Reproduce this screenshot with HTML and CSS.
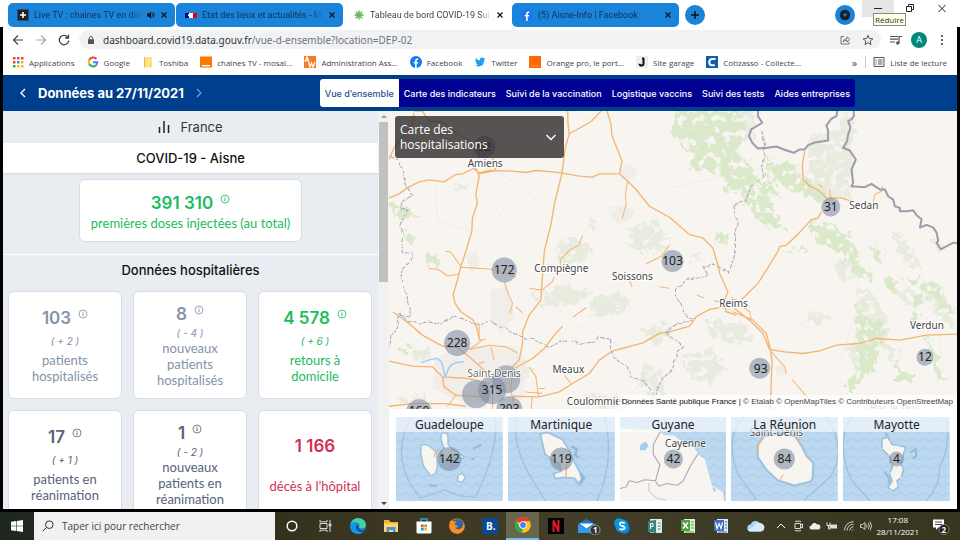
FILE: index.html
```html
<!DOCTYPE html>
<html lang="fr">
<head>
<meta charset="utf-8">
<title>Tableau de bord COVID-19</title>
<link rel="stylesheet" href="styles.css">
</head>
<body>
<svg class="defs" aria-hidden="true">
  <symbol id="info" viewBox="0 0 10 10"><circle cx="5" cy="5" r="4" fill="none" stroke="currentColor" stroke-width=".8"/><path d="M5 4.4V7.2M5 2.6v1" stroke="currentColor" fill="none"/></symbol>
  <symbol id="x" viewBox="0 0 8 8"><path d="M1.5 1.5l5 5M6.5 1.5l-5 5" stroke="currentColor" stroke-width="1.2" fill="none"/></symbol>
  <symbol id="fb" viewBox="0 0 12 12"><circle cx="6" cy="6" r="6" fill="#1877f2"/><path d="M5.1 12V7.6H3.7V5.9h1.4V4.7c0-1.5.9-2.2 2.1-2.2l1.1.1v1.500h-.8c-.6 0-.8.4-.8.8v1h1.500l-.3 1.700H6.700V12z" fill="#fff"/></symbol>
</svg>

<header class="tabs">
  <div class="tab">
    <svg class="ico" viewBox="0 0 12 12"><rect x=".5" y=".5" width="11" height="11" fill="#222"/><path d="M6 3v6M3 6h6" stroke="#fff" stroke-width="1.6"/></svg>
    <span class="tab-title">Live TV : chaines TV en direct</span>
    <svg class="small" viewBox="0 0 8 8"><path d="M0 2.500h1.800L4.200.6v6.800L1.800 5.500H0z" fill="#111"/><path d="M5.200 2.400q1.200 1.600 0 3.200M6.400 1.200q2 2.800 0 5.600" stroke="#111" fill="none" stroke-width=".8"/></svg>
    <button aria-label="Fermer"><svg viewBox="0 0 8 8"><use href="#x"/></svg></button>
  </div>
  <div class="tab">
    <svg class="ico" viewBox="0 0 12 12"><path d="M0 4h4v5H0z" fill="#000091"/><path d="M4 4h4v5H4z" fill="#fff"/><path d="M8 4h4v5H8z" fill="#e1000f"/><path d="M3 5l2 1 1 2-3-1z" fill="#fff"/></svg>
    <span class="tab-title">Etat des lieux et actualités - Minis</span>
    <button aria-label="Fermer"><svg viewBox="0 0 8 8"><use href="#x"/></svg></button>
  </div>
  <div class="tab active">
    <svg class="ico" viewBox="0 0 12 12"><g stroke="#4caf50" stroke-width="1.3"><path d="M6 1.500v9M1.500 6h9M2.800 2.800l6.400 6.400M9.200 2.800L2.800 9.200"/></g><circle cx="6" cy="6" r="2.400" fill="#6abf4b"/></svg>
    <span class="tab-title">Tableau de bord COVID-19 Suivi de</span>
    <button aria-label="Fermer"><svg viewBox="0 0 8 8"><use href="#x"/></svg></button>
  </div>
  <div class="tab">
    <svg class="ico" viewBox="0 0 12 12"><use href="#fb"/></svg>
    <span class="tab-title">(5) Aisne-Info | Facebook</span>
    <button aria-label="Fermer"><svg viewBox="0 0 8 8"><use href="#x"/></svg></button>
  </div>
  <button class="round" aria-label="Nouvel onglet"><svg viewBox="0 0 20 20"><circle cx="10" cy="10" r="10" fill="#1a83da"/><path d="M10 6v8M6 10h8" stroke="#111" stroke-width="1.5"/></svg></button>
  <div class="win">
    <button class="round" aria-label="Rechercher un onglet"><svg viewBox="0 0 20 20"><circle cx="10" cy="10" r="10" fill="#1a83da"/><circle cx="10" cy="10" r="5.200" fill="#1c1c22"/><path d="M7.600 8.800h4.800L10 12z" fill="#1a83da"/></svg></button>
    <button class="ctl min" aria-label="Réduire"><svg viewBox="0 0 32 17"><path d="M12 8.500h8" stroke="#222"/></svg><span class="tip">Réduire</span></button>
    <button class="ctl" aria-label="Niveau inférieur"><svg viewBox="0 0 32 17"><path d="M12.500 6.500h5v5h-5zM14.500 6V4.500h5v5H18" stroke="#222" fill="none"/></svg></button>
    <button class="ctl" aria-label="Fermer la fenêtre"><svg viewBox="0 0 32 17"><path d="M12.500 5l7 7M19.500 5l-7 7" stroke="#222" fill="none"/></svg></button>
  </div>
</header>

<div class="frame">
  <div class="toolbar">
    <button aria-label="Retour"><svg viewBox="0 0 16 16"><path d="M13 8H3.500M8 3.500L3.500 8 8 12.500" stroke="#444" stroke-width="1.200" fill="none"/></svg></button>
    <button aria-label="Avancer"><svg viewBox="0 0 16 16"><path d="M3 8h9.500M8 3.500l4.500 4.500L8 12.500" stroke="#aaa" stroke-width="1.200" fill="none"/></svg></button>
    <button aria-label="Actualiser"><svg viewBox="0 0 16 16"><path d="M12 5.500A4.700 4.700 0 1 0 12.700 8.500M12.500 2.500V6H9" stroke="#444" stroke-width="1.300" fill="none"/></svg></button>
    <div class="omni">
      <svg class="small" viewBox="0 0 8 8"><path d="M1 3.200h6V8H1z" fill="#555"/><path d="M2.300 3.500V2.200a1.700 1.700 0 0 1 3.400 0v1.300" stroke="#555" fill="none"/></svg>
      <a href="#">dashboard.covid19.data.gouv.fr<span>/vue-d-ensemble?location=DEP-02</span></a>
      <svg class="ico" viewBox="0 0 12 12"><path d="M5 2.500H2v7.500h8V8M4 8q.5-3.300 4-3.300V2.800L11 5.400 8 8V6.300Q5.500 6.300 4 8z" stroke="#666" stroke-width=".9" fill="none"/></svg>
      <svg class="ico" viewBox="0 0 12 12"><path d="M6 1.300l1.400 3.200 3.500.3-2.700 2.300.8 3.400-3-1.800-3 1.800.8-3.400L1.100 4.800l3.500-.3z" stroke="#555" fill="none"/></svg>
    </div>
    <button aria-label="Médias"><svg viewBox="0 0 16 16"><path d="M2 4.500h8M2 7.200h8M2 10h5M11 11V4.500h3" stroke="#555" stroke-width="1.200" fill="none"/><circle cx="9.800" cy="11" r="1.700" fill="#555"/></svg></button>
    <button class="avatar">A</button>
    <button aria-label="Menu"><svg viewBox="0 0 16 16" fill="#444"><circle cx="8" cy="4" r="1.100"/><circle cx="8" cy="8" r="1.100"/><circle cx="8" cy="12" r="1.100"/></svg></button>
  </div>

  <nav class="bookmarks">
    <a href="#"><svg class="ico" viewBox="0 0 12 12"><path d="M1 1h2.500v2.500H1zM1 5h2.500v2.500H1z" fill="#ea4335"/><path d="M5 1h2.500v2.500H5zM9 1h2.500v2.500H9z" fill="#e8453c"/><path d="M5 5h2.500v2.500H5z" fill="#4285f4"/><path d="M9 5h2.500v2.500H9zM5 9h2.500v2.500H5zM9 9h2.500v2.500H9z" fill="#fbbc05"/><path d="M1 9h2.500v2.500H1z" fill="#34a853"/></svg>Applications</a>
    <a href="#"><svg class="ico" viewBox="0 0 12 12" fill="none" stroke-width="2"><path d="M9.500 3A4.300 4.300 0 0 0 2.200 4" stroke="#ea4335"/><path d="M2.200 4a4.300 4.300 0 0 0 0 4" stroke="#fbbc05"/><path d="M2.200 8a4.300 4.300 0 0 0 6.600 1.400" stroke="#34a853"/><path d="M8.800 9.400A4.300 4.300 0 0 0 10.200 6.200H6" stroke="#4285f4"/></svg>Google</a>
    <a href="#"><svg class="ico" viewBox="0 0 12 12"><path d="M2 1h8v8.500L8 11.500H2z" fill="#ffe083"/><path d="M2 1h1v10.500H2zM8 11.500v-2h2z" fill="#e6bc4d"/></svg>Toshiba</a>
    <a href="#"><svg class="ico" viewBox="0 0 12 12"><path d="M0 .5h12v11H0z" fill="#ff7900"/><path d="M2 9h8v1.300H2z" fill="#fff"/></svg>chaînes TV - mosaï...</a>
    <a href="#"><svg class="ico" viewBox="0 0 12 12"><path d="M0 0h12v12H0z" fill="#f57c1f"/><path d="M1 6l2-5 2 5M2 4.300h2M4.500 6l1.500 5L7.500 7 9 11l2-5" stroke="#fff" stroke-width="1.300" fill="none"/></svg>Administration Ass...</a>
    <a href="#"><svg class="ico" viewBox="0 0 12 12"><use href="#fb"/></svg>Facebook</a>
    <a href="#"><svg class="ico" viewBox="0 0 12 12"><path d="M1 9.500q2 .2 3-1-1.500-.2-2-1.600h.8Q1.300 6.300 1.300 4.400l.8.300Q.9 3.500 1.700 2 3.500 4.200 6 4.200q-.3-2.500 2-2.700 1 0 1.600.7l1.400-.5-.8 1.200 1-.2-1 1.100Q10.300 10 5 10.500q-2.400 0-4-1z" fill="#1da1f2"/></svg>Twitter</a>
    <a href="#"><svg class="ico" viewBox="0 0 12 12"><path d="M0 0h12v12H0z" fill="#ff6a00"/><path d="M2 9.500h8v.8H2z" fill="#ffa366"/></svg>Orange pro, le port...</a>
    <a href="#"><svg class="ico" viewBox="0 0 12 12"><path d="M0 0h12v12H0z" fill="#eee"/><path d="M7.500 2v5.500q0 2-2 2t-2-1.800M6 2.500h2" stroke="#111" stroke-width="2" fill="none"/></svg>Site garage</a>
    <a href="#"><svg class="ico" viewBox="0 0 12 12"><path d="M0 0h12v12H0z" fill="#0f5fae"/><path d="M9.500 3H6.500Q3.500 3 3.200 6q0 3.200 3 3.200h2.600" stroke="#fff" stroke-width="2" fill="none"/></svg>Cotizasso - Collecte...</a>
    <span class="more">»</span>
    <a href="#" class="reading"><svg class="ico" viewBox="0 0 12 12"><path d="M1 1.500h10v9H1zM2.500 4h1.200M2.500 6h1.200M2.500 8h1.200M5 4h4.500M5 6h4.500M5 8h4.500" stroke="#555" fill="none"/></svg>Liste de lecture</a>
  </nav>

  <div class="sitebar">
    <button aria-label="Jour précédent"><svg viewBox="0 0 10 12"><path d="M7 2L3 6l4 4" stroke="#fff" stroke-width="1.400" fill="none"/></svg></button>
    <h1>Données au 27/11/2021</h1>
    <button aria-label="Jour suivant"><svg viewBox="0 0 10 12"><path d="M3 2l4 4-4 4" stroke="#7f9fcc" stroke-width="1.100" fill="none"/></svg></button>
    <nav class="menu">
      <a href="#" class="on">Vue d’ensemble</a><a href="#">Carte des indicateurs</a><a href="#">Suivi de la vaccination</a><a href="#">Logistique vaccins</a><a href="#">Suivi des tests</a><a href="#">Aides entreprises</a>
    </nav>
  </div>

  <main>
    <section class="panel">
      <div class="country"><svg class="bars" viewBox="0 0 12 14"><path d="M1.500 7v6M6 1v12M10.500 5v8" stroke="#222" stroke-width="1.500"/></svg>France</div>
      <h2 class="place">COVID-19 - Aisne</h2>
      <div class="vaccine">
        <article class="card green wide"><strong>391 310 <svg><use href="#info"/></svg></strong><p>premières doses injectées (au total)</p></article>
      </div>
      <h2 class="section">Données hospitalières</h2>
      <div class="cards">
        <article class="card slate"><strong>103 <svg><use href="#info"/></svg></strong><em>( + 2 )</em><p>patients hospitalisés</p></article>
        <article class="card slate tight"><strong>8 <svg><use href="#info"/></svg></strong><em>( - 4 )</em><p>nouveaux patients hospitalisés</p></article>
        <article class="card green"><strong>4 578 <svg><use href="#info"/></svg></strong><em>( + 6 )</em><p>retours à domicile</p></article>
        <article class="card dark"><strong>17 <svg><use href="#info"/></svg></strong><em>( + 1 )</em><p>patients en réanimation</p></article>
        <article class="card dark tight"><strong>1 <svg><use href="#info"/></svg></strong><em>( - 2 )</em><p>nouveaux patients en réanimation</p></article>
        <article class="card red"><strong>1 166</strong><p>décès à l’hôpital</p></article>
      </div>
    </section>
    <div class="scroll"><i class="up"></i><i class="thumb"></i><i class="down"></i></div>

    <section class="maps">
      <div class="map">
        <svg class="canvas" viewBox="390 111 567 298" preserveAspectRatio="xMidYMid slice">
          <defs>
            <filter id="rag" x="-10%" y="-10%" width="120%" height="120%">
              <feTurbulence type="fractalNoise" baseFrequency=".13" numOctaves="3" seed="4" result="n"/>
              <feDisplacementMap in="SourceGraphic" in2="n" scale="16" xChannelSelector="R" yChannelSelector="G" result="d"/>
              <feColorMatrix in="n" values="0 0 0 0 0 0 0 0 0 0 0 0 0 0 0 0 0 9 0 -3" result="m"/>
              <feComposite in="d" in2="m" operator="in"/>
            </filter>
            <filter id="wob"><feTurbulence type="fractalNoise" baseFrequency=".1" numOctaves="2" seed="7" result="n"/><feDisplacementMap in="SourceGraphic" in2="n" scale="5" xChannelSelector="R" yChannelSelector="G"/></filter>
          </defs>
          <path d="M390 111h567v298H390z" fill="#f8f4f0"/>
          <g fill="#e8ecdf" filter="url(#rag)">
            <path d="M560 240l16-4 18 14-12 16-22-2zM625 228l30-8 14 14-6 18-30 0zM528 296l40-12 26 8-20 12-34 4zM590 300l32-6 10 12-24 12-20-2zM642 328l24-6 8 12-20 10zM590 220l8 0 0 8-8 0zM450 186l20-2-4 6zM610 208l14 2-4 6z"/>
            <path d="M735 110h20l0 30-12 0-10-10zM810 138l28-6 6-20 14 10-8 30 4 30-24 0-20-14zM708 318l38 8 10 12-30 6-18-8zM682 354l30-4 16 16-14 16-22-6-8-10zM810 164l30 4 14 30-26 6-14-14zM836 262l20-4 10 10-20 16-8-8zM854 288l14-2 22 34-6 24-18-20zM890 230l20 14 14 30-20-12zM896 292l14-4 14 12-10 12zM920 286l24 10 12 30-16-6zM846 344l24-6 4 20-20 12zM884 344l16 6 0 12-12-2zM808 312l18-2 4 10-20 4zM688 254l14-2 2 8-14 2zM930 240l14 4-4 8z"/>
            <path d="M500 368l24-4 12 8-20 10-14-4zM588 396l30-4 14 12-30 4zM396 396l20-4 14 8-20 8zM412 350l16-6 4 10-14 8zM642 366l18 0 8 20-14 14-16-16z"/>
          </g>
          <g fill="#dae9ca" filter="url(#rag)">
            <path d="M674 110h66l6 18-8 26 14 12 10 18-30 2-16-14-28-2 6-16-22-22zM766 160l28 6 20 20-20 8-26-14zM734 172l28 12 14 32 12 14-22-2-20-26zM724 182l24 0-2 10-20-2zM798 180l22 8 10 16-20-6zM808 222l26 2 22 20-6 14-20-8-14-12zM782 248l26 2-6 4zM716 232l14 2-4 10-10-4zM842 252l14 0 6 20-12-2zM870 244l14 6-2 14-8-4zM756 190l12-8 12 12-14 8z"/>
            <path d="M846 258l20 6 6 16-14-4zM884 280l10-2 6 12-8 4zM904 278l34 4 16 30-12-4-20-18zM912 292l10 2-2 28-6-2zM856 300l8 16 20 6-2 32-14 22-16 16-8-6 14-20zM890 350l12 20 14 6-4 8-14-6zM928 334l10 30 8 16-8 0-10-30z"/>
            <path d="M390 204l18 2 12 14-22-2zM404 228l14 6-4 10-10-4zM428 254l12 0-2 16-10-2zM402 346l12 0 0 8-10 0z"/>
          </g>
          <g fill="#efebe7"><path d="M478 140l20-3 7 9-10 9-16-3zM620 169l10-5 8 6-4 9-12 0zM610 213l14-8 12 6-6 10-12 3zM466 254l12-4 2 16-8 8zM724 298l12 2 2 10-10 4zM776 366l8 0 2 10-9-2zM826 186l14 0 4 10-14 3zM492 290l16-4 8 30-14 16-10-10zM436 358l28-12 50 0 14 14-4 40-60 2-30-14z" opacity=".8"/></g>
          <g transform="translate(380 108) scale(.3333)" fill="none" stroke="#efe9e4" stroke-width="2"><path d="M350 190L410 225 540 330M170 220l5 120 100 30M290 205l120 190M740 200l-130 180M870 240l330-70M1000 400l180 200 110 60M1440 430l-10 180-50 150M1550 500l120 120 20 170M620 30l80 0M400 480l200 180M600 650l150 80"/></g>
          <g transform="translate(380 108) scale(.3333)" fill="none" stroke="#f3b571" stroke-width="4" stroke-linejoin="round">
            <path d="M30 155L45 120 100 50 105 15M105 10h25l20 30 40 2 40 33 65 40 5 35M30 270L60 258 85 240 120 222 150 216 195 222 230 200 250 198 283 182 300 195 330 188 400 190 440 194 470 188 520 192 550 196 600 205 640 208 660 198 720 198M290 180L300 205 290 260 295 285 280 330 278 370 262 425 245 476 235 516 222 561 228 586 245 611 280 634 292 656 300 690M565 -10L566 50 570 78 558 120 548 196 525 290 515 350 495 430 487 541 485 576 450 621 430 671 430 706 420 756 400 776M570 78L635 42 665 10M683 10L695 50 698 85 728 160 720 198 745 220 770 245 810 295 870 328 930 380 970 390 1000 420 1018 480 1020 496 1045 551 1035 576M340 150l10 38-50 10"/>
            <path d="M745 215L738 260 740 290 728 333M610 382L598 412 572 425 543 455 543 470M200 430l15 3 30 42M870 412L845 445 800 468" stroke-width="3"/>
          </g>
          <g transform="translate(380 260) scale(.3333)" fill="none" stroke="#f3b571" stroke-width="4" stroke-linejoin="round">
            <path d="M42 155L90 190 130 225 190 258 235 262 270 290 315 330M30 303L100 318 160 320 190 350 270 355 330 370M190 350L195 380 230 405 300 410M870 215L840 220 790 248 740 262 700 272 660 300 630 340 580 370 540 395 480 410 400 408M550 198L525 225 495 265 460 295 400 328M30 438L100 430 200 430 260 438"/>
            <path d="M150 25L180 30 205 48 240 42M245 22L340 28 410 50M375 65L385 95 400 130 392 160M410 140l20 18M525 50L520 65 488 90 450 85M620 143L580 172M270 268l40-28M300 190v50l20-3M270 268L330 255 380 260 415 278M335 262L345 300M450 320L470 350 478 410M555 345L575 370M230 405l-25 33M400 330l-5 60 10 50M438 395l50 4M340 400v50M478 385h20M460 408l-5 40M750 60l8 20M840 80l30 5M300 310l15-5" stroke-width="3"/>
          </g>
          <g transform="translate(670 108) scale(.3333)" fill="none" stroke="#f3b571" stroke-width="4" stroke-linejoin="round">
            <path d="M405 130L398 170 400 215 420 235 450 250 475 275M455 312L445 330 425 335 385 378 350 412 330 415 325 430 265 526 215 576M475 270L515 270 545 280"/><path d="M638 235L635 250 615 260 610 285M445 228L458 238M480 245L482 270M590 305h18" stroke-width="3"/>
          </g>
          <g transform="translate(670 260) scale(.3333)" fill="none" stroke="#f3b571" stroke-width="4" stroke-linejoin="round">
            <path d="M0 215L60 198 80 170 120 148 165 140 170 155 200 165M195 145L245 185 280 220 300 268 345 275 400 280 450 272 500 255 570 250 620 235 690 240 770 225 862 222M190 155l60 25 40 40 12 48 5 32-5 150"/><path d="M205 130L240 155 245 180M305 275L345 320 350 340M368 358L415 415M82 105L105 115M135 122l25 5M185 112l25 15" stroke-width="3"/>
          </g>
          <path d="M422 362.500q8-3 13-4t8 5l3 13 4-9q3-6 15-6" fill="none" stroke="#a5cdf0" stroke-width="1.500"/>
          <g filter="url(#wob)" fill="none" stroke="#a9a4b6" stroke-dasharray="4 1.500" stroke-width="1">
            <path transform="translate(1 1)" d="M390 155l7 3 7 15 3 13 5 8-8 6-4 8 8 2-5 7-3 8 4 8-3 9 3 10 8 0-1 8-9 8 -1 6 3 14 6 18 0 10-12-2-1 10-5 12-5 16M400 312l7 8 13 3 10-3 10 3 15-8 12 5 12 5 11-5 14 7 16 8 17 5 10 6 13-7 20 3 13-1 4-5 13 2 2 17 15 12 5 10 11 3 12 14 0 14M655 394l7-18 10-8 5-18 6-4-10-8-6-8 9-8 16-2-6-6-10-18 0-10 12-8 18-4-3-8 10-2 16 7 5-17 0-20 3-14-5-14 6-5 7-1 5-14 14-10-3-10 4-22-4-14"/>
          </g>
          <g transform="translate(670 108) scale(.3333)" fill="none" stroke="#9e9bad" stroke-width="6" stroke-linejoin="round"><path d="M265 5v20l13 20-33 20-7 20 10 20 17 17 28-2 27-4 25 10 27 9 18-10 15 0 10-13 20-8 40-6 0-30-5-15 15-20 15-8 5-30M552 5l0 20-7 10-10 5 7 20-7 20-3 20-12 20 20 8 18 27-13 30 5 40-5 10 40 3 20-10 10 7 15 10 15 0 10 20 15 10 5 20 15 5 0 10 20 0 20-3 10 15 15 12-5 25 20-8 20 8 10 15 5 25-5 5 12 20 38-20 20 3"/></g>
          <g fill="#7e8ea2" fill-opacity=".58"><circle cx="485" cy="147" r="11"/><circle cx="831" cy="207" r="9.500"/><circle cx="673" cy="261" r="11"/><circle cx="505" cy="270" r="12.500"/><circle cx="458" cy="343" r="13"/><circle cx="507" cy="379" r="14"/><circle cx="477" cy="394" r="14"/><circle cx="493" cy="390" r="14"/><circle cx="510" cy="409" r="13"/><circle cx="420" cy="412" r="13"/><circle cx="760" cy="368" r="10.500"/><circle cx="925" cy="357" r="8.500"/></g>
          <g class="town"><text x="486" y="167">Amiens</text><text x="562" y="272">Compiègne</text><text x="633" y="280">Soissons</text><text x="734" y="307">Reims</text><text x="864" y="209">Sedan</text><text x="927" y="329">Verdun</text><text x="569" y="373">Meaux</text><text x="495" y="377" opacity=".75">Saint-Denis</text><text x="599" y="405">Coulommiers</text><text x="895" y="412" opacity=".6">Bar-le-Duc</text></g>
          <g class="count"><text x="485" y="151">92</text><text x="831" y="211">31</text><text x="673" y="265">103</text><text x="505" y="274">172</text><text x="458" y="347">228</text><text x="493" y="394">315</text><text x="510" y="413">203</text><text x="420" y="415">160</text><text x="761" y="373">93</text><text x="925" y="361">12</text></g>
        </svg>
        <button class="picker"><span>Carte des hospitalisations</span><svg viewBox="0 0 12 12"><path d="M1.500 4L6 8.500 10.500 4" stroke="#fff" stroke-width="1.400" fill="none"/></svg></button>
        <p class="credit">Données Santé publique France | <span>© Etalab © OpenMapTiles © Contributeurs OpenStreetMap</span></p>
      </div>
      <div class="insets">
        <figure><figcaption>Guadeloupe</figcaption>
          <svg viewBox="0 0 106 84" preserveAspectRatio="xMidYMid slice"><defs><pattern id="sea" width="12" height="9" patternUnits="userSpaceOnUse"><path d="M0 0h12v9H0z" fill="#bcd8f1"/><path d="M0 5q3 3 6 0t6 0" fill="none" stroke="#adcbe6" stroke-width="1"/></pattern></defs><path d="M0 0h106v84H0z" fill="url(#sea)"/>
          <g transform="scale(.3636 .3333) translate(-19 -27)"><path d="M55 40Q10 140 60 230L85 270 150 245 190 262 235 268Q300 130 290 27" fill="none" stroke="#9fc4da" stroke-width="4"/><path d="M143 78q12-8 18 6l0 26 12 14 32 22 -4 6-30-4-22 6-10-4 4-20 8-10q-12-20-8-42z" fill="#f8f4f0" stroke="#9cc3de" stroke-width="4"/><path d="M88 112q16-6 28 8l14 14 2 40-4 22-14 8-20-30-8-40z" fill="#f8f4f0" stroke="#9cc3de" stroke-width="4"/><path d="M190 200l10-4 8 12-8 14-14-4z" fill="#f8f4f0" stroke="#9cc3de" stroke-width="4"/><path d="M230 122l22-12M225 152l8 0M110 232l20 0" stroke="#91bad6" stroke-width="6"/><path d="M123 148l4-18 16-4" stroke="#f3b571" stroke-width="3" fill="none"/></g><circle cx="53" cy="42" r="12"/><text x="53" y="46">142</text></svg></figure>
        <figure><figcaption>Martinique</figcaption>
          <svg viewBox="0 0 106 84" preserveAspectRatio="xMidYMid slice"><path d="M0 0h106v84H0z" fill="url(#sea)"/>
          <g transform="scale(.3636 .3333) translate(-327 -27)"><path d="M352 27Q335 100 385 200L430 278M590 27q30 130-20 250" fill="none" stroke="#9fc4da" stroke-width="4"/><path d="M415 78l20-4 40 20 20 35 14 35 15 30 6 30-8 8-14-22-30-2-22 4-5-15 22-8-5-20-40-30z" fill="#f8f4f0" stroke="#9cc3de" stroke-width="5"/><path d="M500 115l15 10-5 15 10 10M525 195l10 15-14 15" stroke="#91bad6" stroke-width="7" fill="none"/><path d="M487 170l-2 35" stroke="#f3b571" stroke-width="4"/></g><circle cx="53" cy="42" r="11.500"/><text x="53" y="46">119</text></svg></figure>
        <figure><figcaption>Guyane</figcaption>
          <svg viewBox="0 0 106 84" preserveAspectRatio="xMidYMid slice"><path d="M0 0h106v84H0z" fill="url(#sea)"/>
          <g transform="scale(.3636 .3333) translate(-634 -27)"><path d="M630 62l60 4 45-2 20 18 25 0 30 25 25 10 15 25 15 10 20 80 30 20 5 50H630z" fill="#f8f4f0"/><path d="M690 110l15-8 7 12-10 14-14-2zM885 236l12 8-6 8z" fill="#a5cdf0"/><path d="M745 70l-20 40 0 30 18 30-12 48-30-3-20 8-22-5-8 18-20 6M731 220l10 14 20-8 30 5 15-12 20-45 22-38" fill="none" stroke="#a9a4b6" stroke-width="3"/><path d="M712 225l2 25 20 20 25 5" fill="none" stroke="#ccc" stroke-width="3"/></g><circle cx="53" cy="42" r="9.500"/><text class="lbl" x="65" y="30">Cayenne</text><text x="53" y="46">42</text></svg></figure>
        <figure><figcaption>La Réunion</figcaption>
          <svg viewBox="0 0 106 84" preserveAspectRatio="xMidYMid slice"><path d="M0 0h106v84H0z" fill="url(#sea)"/>
          <g transform="scale(.3636 .3333) translate(-940 -27)"><path d="M975 27Q920 90 960 200l50 75M1200 27q60 100 10 180l-70 68" fill="none" stroke="#9fc4da" stroke-width="4"/><path d="M1030 85l40-8 45 8 18 30 14 30 18 20-2 45-5 10-45 12-45-15-30-30-25-40 0-35z" fill="#f8f4f0" stroke="#9cc3de" stroke-width="6"/><path d="M1015 140l-5-20 15-30M1120 88l10 25M1073 215l10-15" fill="none" stroke="#f3b571" stroke-width="3"/></g><circle cx="53" cy="42" r="10.500"/><text class="lbl" x="45" y="19">Saint-Denis</text><text x="53" y="46">84</text></svg></figure>
        <figure><figcaption>Mayotte</figcaption>
          <svg viewBox="0 0 106 84" preserveAspectRatio="xMidYMid slice"><path d="M0 0h106v84H0z" fill="url(#sea)"/>
          <g transform="scale(.3636 .3333) translate(-1247 -27)"><path d="M1270 27Q1225 110 1270 215l50 62M1528 27q15 90-18 150 5 50-35 100" fill="none" stroke="#9fc4da" stroke-width="4"/><path d="M1355 95l14-4 10 20 36 8-5 20-8 26 8 20-6 22-12 10 4 18-12 10-12-8 12-18-8-22 8-20-6-30-22-25z" fill="#f8f4f0" stroke="#93bdda" stroke-width="8" stroke-dasharray="24 4"/><path d="M1355 95l14-4 10 20 36 8-5 20-8 26 8 20-6 22-12 10 4 18-12 10-12-8 12-18-8-22 8-20-6-30-22-25z" fill="#f8f4f0"/><path d="M1430 135l15-12 2 20-10 10M1360 190l12 20 2 18M1362 75l8 10" stroke="#93bdda" stroke-width="6" fill="none"/></g><circle cx="53" cy="42" r="7.500"/><text x="53" y="46">4</text></svg></figure>
      </div>
    </section>
  </main>
</div>

<footer class="taskbar">
  <button class="start" aria-label="Démarrer"><svg viewBox="0 0 12 12" fill="#fff"><path d="M0 1.700L5 1v4.700H0zM5.600.9L12 0v5.700H5.600zM0 6.300h5V11l-5-.7zM5.600 6.300H12V12l-6.400-.9z"/></svg></button>
  <label class="search"><svg viewBox="0 0 12 12"><circle cx="7.300" cy="4.700" r="3.800" fill="none" stroke="#333"/><path d="M4.600 7.400L.8 11.200" stroke="#333"/></svg><input type="text" placeholder="Taper ici pour rechercher" aria-label="Rechercher"></label>
  <div class="apps">
    <button aria-label="Cortana"><svg viewBox="0 0 18 18"><circle cx="9" cy="9" r="4.800" fill="none" stroke="#fff" stroke-width="1.500"/></svg></button>
    <button aria-label="Vue des tâches"><svg viewBox="0 0 18 18"><path d="M4 6.500h7v5H4zM4 3v1.800h7V3M4 15v-1.800h7V15M14 3v12M13 7h2v2h-2z" fill="none" stroke="#ddd"/></svg></button>
    <button aria-label="Edge"><svg viewBox="0 0 18 18"><circle cx="9" cy="9" r="8" fill="#1377c9"/><path d="M1.500 7Q3.500 1 9.500 1q7 .5 7.500 7 0 3.500-4 3.500-3.500 0-3-2 1-1.500-.5-3Q6 4 1.500 7z" fill="#43cfa0"/><path d="M1.500 7Q6 3.500 9.500 6.500 6 8 7.500 12q2 4 7 3Q8 19 3 14.500.5 11 1.500 7z" fill="#1597e0"/><path d="M7 9.500q-.5 4.500 5 5.500 2 0 3.500-1.500Q9 14 9.500 8.500 7.500 8 7 9.500z" fill="#0c4f9b"/></svg></button>
    <button aria-label="Explorateur"><svg viewBox="0 0 18 18"><path d="M2 3h5l1.500 2H16v10H2z" fill="#f2b335"/><path d="M2 6.500h14V15H2z" fill="#ffd769"/><path d="M4.500 15v-5h9v5h-2.500v-2H7v2z" fill="#3e97dd"/></svg></button>
    <button aria-label="Store"><svg viewBox="0 0 18 18"><path d="M6 5V2h6v3" fill="none" stroke="#23a3e6" stroke-width="1.500"/><path d="M1.500 4.500h15V15q0 1.500-1.500 1.500H3q-1.500 0-1.500-1.500z" fill="#fff"/><path d="M6 7.500h2.700v2.700H6z" fill="#f25022"/><path d="M9.300 7.500H12v2.700H9.300z" fill="#7fba00"/><path d="M6 10.800h2.700v2.700H6z" fill="#00a4ef"/><path d="M9.300 10.800H12v2.700H9.300z" fill="#ffb900"/></svg></button>
    <button aria-label="Firefox"><svg viewBox="0 0 18 18"><circle cx="9" cy="9" r="7.800" fill="#e8612c"/><circle cx="9.500" cy="7.500" r="5.500" fill="#2468b3"/><path d="M2 4q2-1 3 .5 2-.5 4 .5-3 1-2 3 3 0 3 1.500-2 2-3.500 1 2.500 3 6.500 1 3-2 2-6 2 2 1.500 5.500-2 5.500-7.500 5.700Q1 15.500 1.300 8z" fill="#f79021"/></svg></button>
    <button aria-label="Booking"><svg viewBox="0 0 18 18"><path d="M1 1h16v16H1z" fill="#0b4a8f"/><text x="5" y="13" class="logo">B.</text></svg></button>
    <button class="current" aria-label="Chrome"><svg viewBox="0 0 18 18"><circle cx="9" cy="9" r="7.800" fill="#fbc116"/><path d="M9 9L2.200 5.100A7.800 7.800 0 0 1 15.800 5.100L9 5.200z" fill="#e53e30"/><path d="M2.200 5.100L6 11l3 2-1.300 3.700A7.800 7.800 0 0 1 2.200 5.100z" fill="#2da94f"/><circle cx="9" cy="9" r="3.800" fill="#fff"/><circle cx="9" cy="9" r="2.900" fill="#4285f4"/></svg></button>
    <button aria-label="Netflix"><svg viewBox="0 0 18 18"><path d="M1 1h16v16H1z"/><path d="M6.500 15V3.500l5 11V3" fill="none" stroke="#d81f26" stroke-width="2"/></svg></button>
    <button aria-label="Courrier"><svg class="mail" viewBox="0 0 24 18"><path d="M1 7l8.500-5L18 7v9H1z" fill="#1c77c9"/><path d="M2.500 6.500h14l-7 5z" fill="#fff"/><path d="M1 7l8.500 5L18 7v9H1z" fill="#2c9ce8"/><circle cx="18" cy="13" r="5" fill="#333" stroke="#aaa" stroke-width=".8"/><text x="16" y="16" class="logo num">1</text></svg></button>
    <button aria-label="Skype"><svg viewBox="0 0 18 18"><circle cx="6" cy="6" r="4.800" fill="#0a9be0"/><circle cx="12" cy="12" r="4.800" fill="#0a78d4"/><circle cx="9" cy="9" r="6.800" fill="#0a93e0"/><path d="M11.700 6.500Q9 4.500 7 6.200q-1 2 2 2.700 3.500.8 2.500 2.800-2.300 1.800-5 0" fill="none" stroke="#fff" stroke-width="1.600"/></svg></button>
    <button aria-label="Publisher"><svg viewBox="0 0 18 18"><path d="M4 2h12v14H4z" fill="#d8eceb"/><path d="M2 4l8-1v13l-8-1z" fill="#35837f"/><path d="M4.500 12V6.500h2.500v3h-2M11.500 5h3M11.500 7.500h3M11.500 10h3M11.500 12.500h3" stroke="#fff" fill="none"/><path d="M12 6h2.500M12 9h2.500M12 12h2.500" stroke="#35837f"/></svg></button>
    <button aria-label="Excel"><svg viewBox="0 0 18 18"><path d="M5 2h11v14H5z" fill="#e3f2d9"/><path d="M2 3h9v11H2z" fill="#4da13f"/><path d="M4 5.500l5 6M9 5.500l-5 6" stroke="#fff" stroke-width="1.500"/><path d="M12 5h3M12 8h3M12 11h3M6 15h9" stroke="#4da13f"/></svg></button>
    <button aria-label="Word"><svg viewBox="0 0 18 18"><path d="M5 2h11v14H5z" fill="#dfe9f7"/><path d="M2 3h10v11H2z" fill="#3a6fc0"/><path d="M3.500 5.500L5 11.500l2-5 2 5 1.500-6" stroke="#fff" stroke-width="1.200" fill="none"/><path d="M13 5h2M13 8h2M13 11h2M6 15h9" stroke="#3a6fc0"/></svg></button>
  </div>
  <div class="tray">
    <svg class="cloud" viewBox="0 0 18 14"><path d="M4 12.500a3.500 3.500 0 0 1-.3-7 5 5 0 0 1 9-1.300 4.200 4.200 0 0 1 .8 8.300z" fill="#a9d7f7"/><path d="M4 12.500q-2.500 0-3-2 5-1 8-6 3-1.500 5.500 0 3 1 3 4-.5 4-4 4z" fill="#d7ecfb"/></svg>
    <svg viewBox="0 0 12 12"><path d="M2 8l4-4 4 4" stroke="#fff" fill="none"/></svg>
    <svg viewBox="0 0 12 12"><path d="M3 3.500h5.500v5H3zM8.500 5l2-1v4l-2-1M3 1.500q3-1 6 0M3 10.500q3 1 6 0" stroke="#ddd" fill="none"/></svg>
    <svg viewBox="0 0 12 12"><path d="M2.500 9.500a2 2 0 0 1 0-4 3 3 0 0 1 5.500-1 2.500 2.500 0 0 1 1.500 5z" fill="#eee"/></svg>
    <svg viewBox="0 0 12 12"><path d="M3.500 4.500h7.500v4H3.500z" fill="#ddd"/><path d="M1 2.500v3h3v-3M2.500 5.500V9h2" stroke="#ddd" fill="none"/></svg>
    <svg viewBox="0 0 12 12"><path d="M1.500 10.500Q2 2.500 10.500 1.500M4 10.500Q4.500 5 10.500 4M6.500 10.500Q7 7.500 10.500 6.500M9 10.500l1-1" stroke="#ccc" fill="none"/></svg>
    <svg viewBox="0 0 12 12"><path d="M.5 4.500h2l2.500-2v7l-2.500-2h-2zM6.500 4.500q1 1.500 0 3M8.300 3q2 3 0 6M10 1.500q3 4.500 0 9" stroke="#ddd" fill="none" stroke-width=".9"/></svg>
    <time>17:08<br>28/11/2021</time>
    <svg class="notif" viewBox="0 0 18 18"><path d="M1 2.500h11v8H6l-2 2.500v-2.500H1z" fill="#fff"/><path d="M3 5h7M3 7.500h7" stroke="#444"/><circle cx="12" cy="12.500" r="5" fill="#222" stroke="#999" stroke-width=".7"/><text x="9.500" y="15.500" class="logo num">2</text></svg>
  </div>
</footer>
</body>
</html>
```
FILE: styles.css
```css
* { box-sizing: border-box; }
body { margin: 0; height: 100vh; display: flex; flex-direction: column; overflow: hidden; background: #000; font: 9px "Open Sans", "Noto Sans", sans-serif; color: #333; }
button { border: 0; padding: 0; background: none; font: inherit; color: inherit; display: flex; align-items: center; justify-content: center; flex: none; }
a { color: inherit; text-decoration: none; }
h1, h2, p, figure { margin: 0; }
svg { display: block; flex: none; }
.defs { position: absolute; width: 0; height: 0; }
.ico { width: 12px; height: 12px; }
.small { width: 8px; height: 8px; }

.tabs { flex: none; display: flex; align-items: flex-start; height: 27px; padding: 3px 2px 0 8px; background: #fff; }
.tab { display: flex; align-items: center; gap: 5px; flex: 0 1 167px; min-width: 0; height: 24px; padding: 0 7px 0 9px; margin-right: 1px; background: #1a83da; border-radius: 5px; color: #12314f; font-family: Roboto, "Open Sans", sans-serif; }
.tab.active { background: #fff; color: #444; }
.tab-title { flex: 1; min-width: 0; overflow: hidden; white-space: nowrap; -webkit-mask-image: linear-gradient(90deg, #000 90%, transparent); mask-image: linear-gradient(90deg, #000 90%, transparent); }
.tab button svg { width: 8px; height: 8px; color: #111; }
.round { margin: 2px 0 0 5px; }
.round svg { width: 20px; height: 20px; }
.win { display: flex; margin: -3px 0 0 auto; }
.win .round { margin: 5px 7px 0 0; align-self: flex-start; }
.ctl { position: relative; width: 32px; height: 17px; }
.ctl svg { width: 32px; height: 17px; }
.min { background: #e5e5e5; }
.tip { position: absolute; z-index: 2; top: 13px; left: 11px; padding: 0 1px; line-height: 11px; border: 1px solid #888; background: #ffffe1; color: #333; font-size: 8px; }

.frame { flex: 1; min-height: 0; display: flex; flex-direction: column; padding: 0 3px; margin-bottom: 3px; }
.toolbar { flex: none; display: flex; align-items: center; gap: 7px; height: 25px; padding: 0 7px; background: #fff; }
.toolbar button svg { width: 16px; height: 16px; }
.omni { flex: 1; display: flex; align-items: center; gap: 8px; height: 19px; padding: 0 7px 0 8px; border-radius: 10px; background: #f0f2f4; font: 10px "Noto Sans", sans-serif; }
.omni a { flex: 1; }
.omni span { color: #70757a; }
.omni .ico { margin-left: 3px; }
.toolbar .avatar { width: 16px; height: 16px; border-radius: 50%; background: #00897b; color: #fff; }

.bookmarks { flex: none; display: flex; align-items: center; gap: 12px; height: 23px; padding: 0 10px 3px 9px; background: #fff; font-size: 8px; color: #444; white-space: nowrap; }
.bookmarks a { display: flex; align-items: center; gap: 5px; }
.more { margin-left: auto; font-size: 11px; }
.bookmarks .reading { border-left: 1px solid #ccc; padding-left: 7px; margin-left: -4px; }

.sitebar { flex: none; display: flex; align-items: center; gap: 10px; height: 36px; padding: 0 102px 0 15px; background: #003e8e; color: #fff; font-family: Inter, "Open Sans", sans-serif; }
.sitebar h1 { font-size: 13px; font-weight: 700; white-space: nowrap; }
.sitebar button svg { width: 10px; height: 12px; }
.menu { display: flex; margin-left: auto; height: 28px; border-radius: 3px; overflow: hidden; background: #000091; font-size: 9px; font-weight: 500; white-space: nowrap; }
.menu a { display: flex; align-items: center; padding: 0 5px; }
.menu .on { background: #fff; color: #2c4f8e; }

main { flex: 1; min-height: 0; display: flex; background: #fff; }
.panel { flex: 0 1 375px; min-width: 0; overflow: hidden; background: #e9edf2; font-family: Inter, "Open Sans", sans-serif; text-align: center; }
.country { display: flex; align-items: center; justify-content: center; gap: 10px; height: 32px; font-size: 13px; }
.bars { width: 12px; height: 14px; }
.place, .section { font-size: 13px; font-weight: 500; line-height: 30px; color: #111; }
.place { background: #fff; box-shadow: 0 1px 2px #ccd3dd; }
.vaccine { display: flex; justify-content: center; padding: 6px 0 12px; border-bottom: 1px solid #fff; }
.section { padding-bottom: 6px; }
.card { display: flex; flex-direction: column; align-items: center; justify-content: center; min-height: 108px; padding: 0 16px; border: 1px solid #d3dce7; border-radius: 6px; background: #fff; font: 13px/16px Lato, "Open Sans", sans-serif; }
.card strong { display: flex; gap: 7px; font: 600 17px/24px Inter, "Open Sans", sans-serif; }
.card strong svg { width: 10px; height: 10px; margin-top: 3px; }
.card em { font: italic 10px/14px Inter, "Open Sans", sans-serif; margin: 4px 0; }
.card.tight em { margin: 0; }
.card.wide { min-height: 63px; padding: 0 11px; }
.cards { display: grid; grid-template-columns: repeat(3, 1fr); gap: 11px; padding: 0 6px 0 5px; }
.green { color: #1dbb60; }
.slate { color: #8593a8; }
.dark { color: #566379; }
.card.red { color: #cf3154; gap: 20px; padding: 0 4px; }
.scroll { flex: none; width: 11px; display: flex; flex-direction: column; align-items: center; padding: 4px 0; background: #f1f1f1; }
.up { border: 3px solid transparent; border-top: 0; border-bottom-color: #999; }
.thumb { width: 9px; height: 160px; margin-top: 4px; background: #c1c1c1; }
.down { margin-top: auto; border: 3px solid transparent; border-bottom: 0; border-top-color: #444; }

.maps { flex: 1; min-width: 0; display: flex; flex-direction: column; }
.map { flex: 1; min-height: 0; position: relative; }
.canvas { width: 100%; height: 100%; }
.town { font: 10px "Noto Sans", sans-serif; text-anchor: middle; fill: #444; stroke: #fff; stroke-width: 2px; paint-order: stroke; }
.count { font: 12px "Noto Sans", sans-serif; text-anchor: middle; fill: #222; }
.picker { position: absolute; top: 5px; left: 6px; width: 169px; height: 42px; padding: 0 7px 0 5px; justify-content: space-between; border-radius: 3px; background: rgba(45, 43, 42, .8); color: #fff; font: 500 12px/15px "Open Sans", sans-serif; text-align: left; }
.picker span { width: 110px; }
.picker svg { width: 12px; height: 12px; }
.credit { position: absolute; right: 0; bottom: 0; padding: 0 4px; background: rgba(255, 255, 255, .7); font: 8px/14px "Liberation Sans", sans-serif; color: #111; }
.credit span { color: #444; }
.insets { flex: none; display: grid; grid-template-columns: repeat(5, 1fr); gap: 5px; padding: 8px 7px; background: #fff; }
figure { position: relative; }
figure svg { width: 100%; height: 84px; }
figcaption { position: absolute; inset: 0 0 auto; background: rgba(255, 255, 255, .6); font: 12px/15px "Noto Sans", sans-serif; text-align: center; color: #222; }
figure circle { fill: #7e8ea2; fill-opacity: .6; }
figure text { font: 12px "Noto Sans", sans-serif; text-anchor: middle; fill: #222; }
figure .lbl { font-size: 10px; fill: #444; stroke: #fff; stroke-width: 1px; paint-order: stroke; }

.taskbar { flex: none; display: flex; height: 28px; background: linear-gradient(90deg, #1c271e, #38341f 35%, #423e2a 60%, #38361f); color: #fff; }
.start { width: 34px; }
.start svg, .search svg { width: 12px; height: 12px; }
.search { flex: 0 1 241px; display: flex; align-items: center; gap: 8px; padding: 0 8px; background: #f1f1f1; }
.search input { flex: 1; min-width: 0; border: 0; padding: 0; background: none; font: 10px "Open Sans", sans-serif; }
.search input::placeholder { color: #444; }
.apps { display: flex; }
.apps button { width: 33px; }
.apps svg { width: 18px; height: 18px; }
.apps .mail { width: 24px; }
.apps .current { background: #68654f; border-bottom: 2px solid #76b9ed; }
.logo { font: 700 10px "Open Sans", sans-serif; fill: #fff; }
.num { font-size: 8px; }
.tray { display: flex; align-items: center; gap: 5px; margin-left: auto; padding-right: 10px; }
.tray svg { width: 12px; height: 12px; }
.tray .cloud { width: 18px; height: 14px; margin-right: 5px; }
.tray .notif { width: 18px; height: 18px; margin-left: 8px; }
.tray time { font-size: 8px; line-height: 12px; text-align: center; }
```
